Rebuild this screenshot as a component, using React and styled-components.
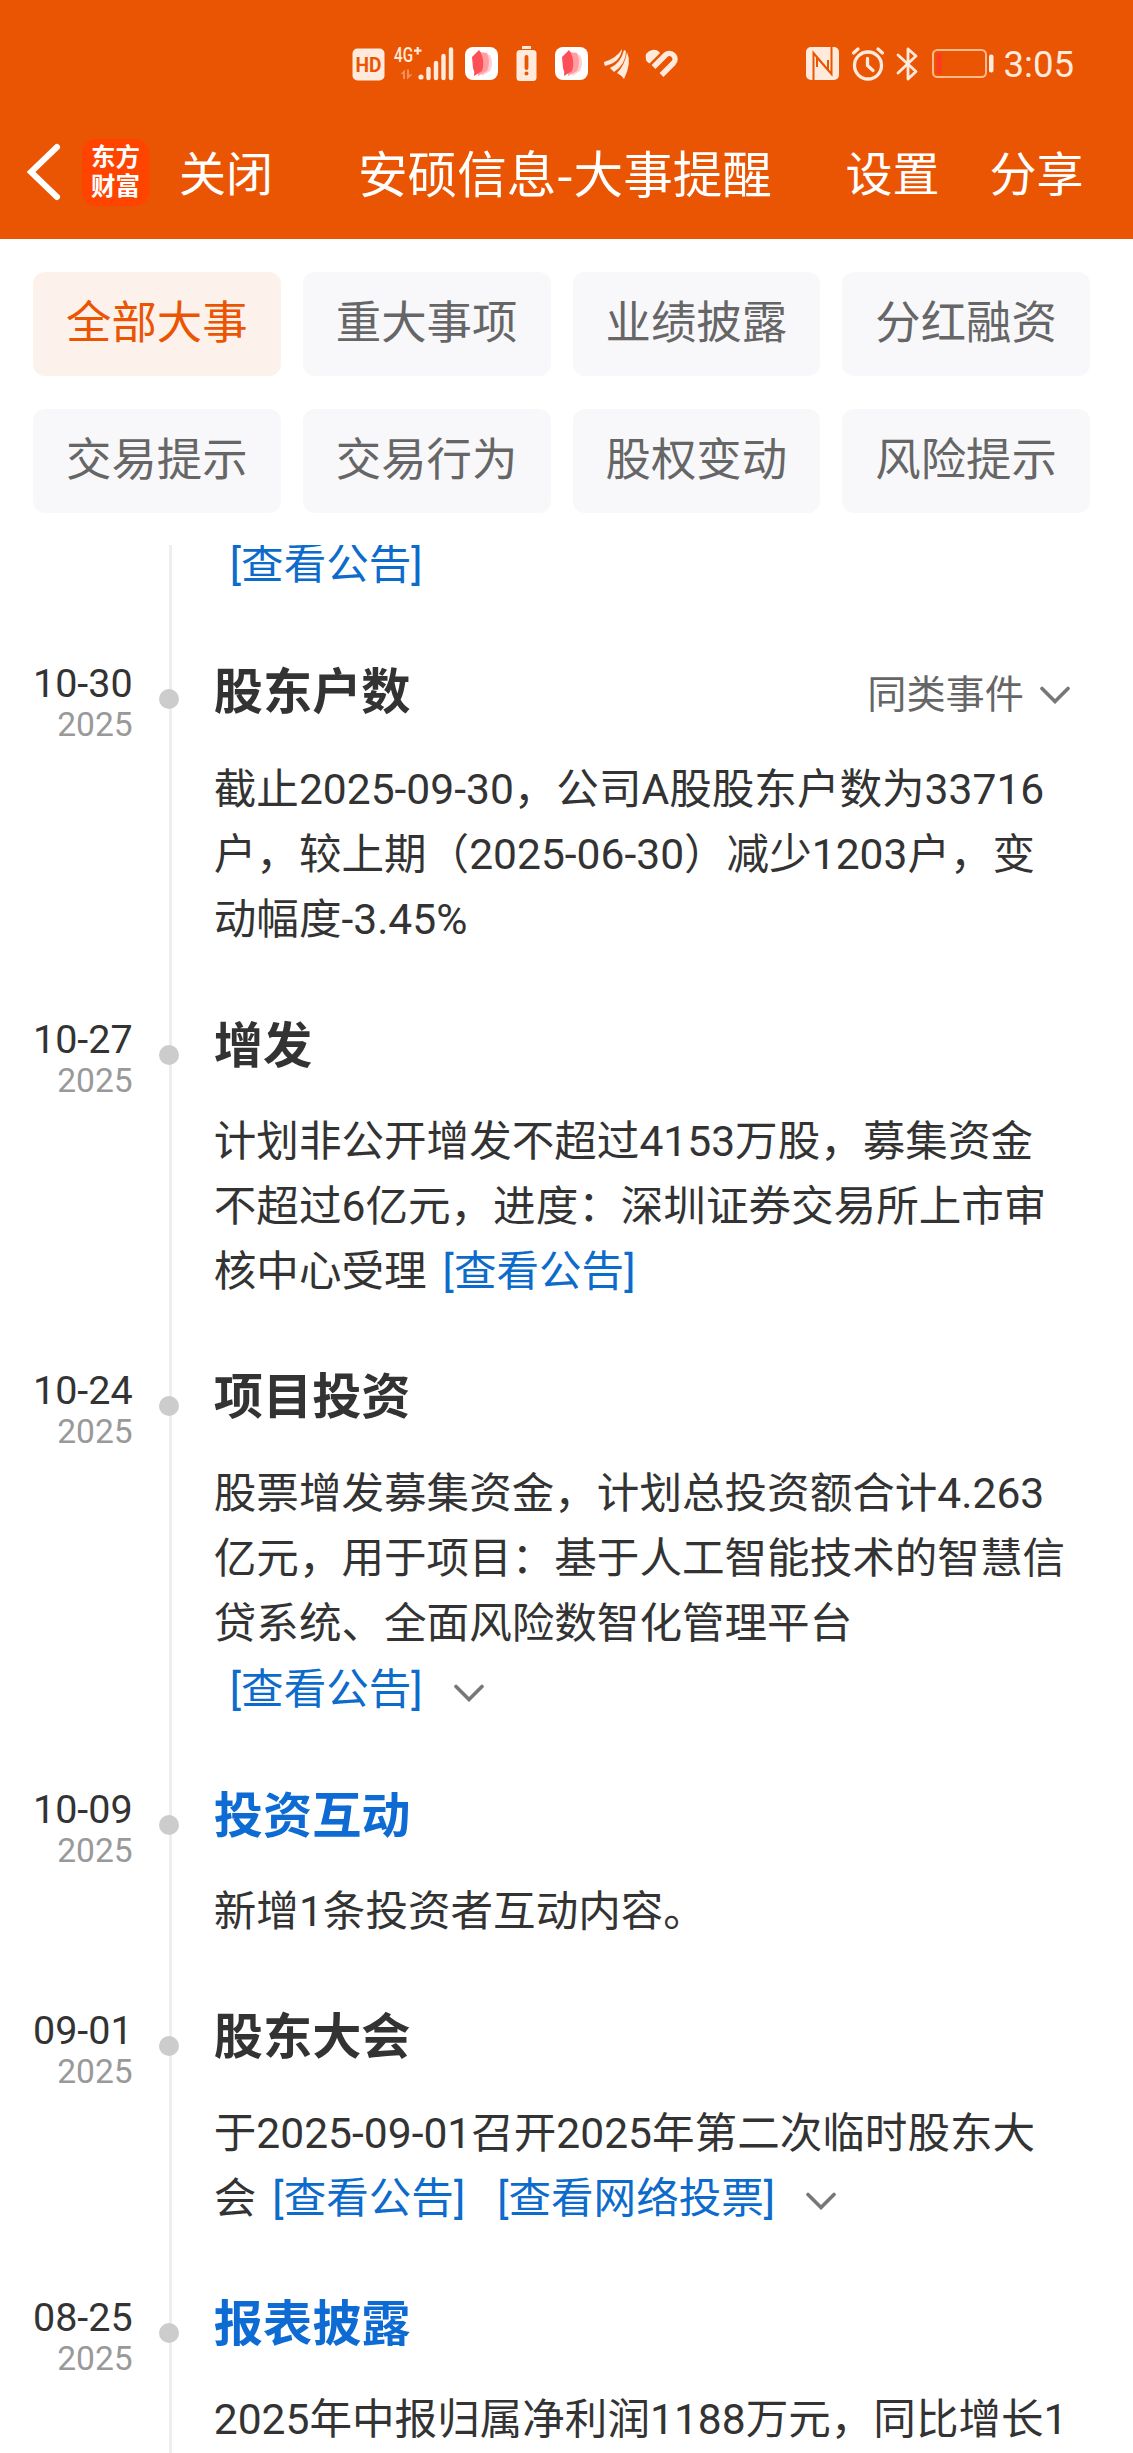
import React from "react";
import styled, { createGlobalStyle, css } from "styled-components";

const GlobalStyle = createGlobalStyle`
    body {
        margin: 0;
        background-color: #FFFFFF;
        font-family: Roboto, "Noto Sans CJK SC", sans-serif;
    }
`;

const Page = styled.div`
    display: flex;
    flex-direction: column;
    width: 1133px;
    height: 2453px;
    overflow: hidden;
    background-color: #FFFFFF;
`;

const Header = styled.header`
    height: 239px;
    background-color: #EA5504;
    color: #FFFFFF;
`;

const StatusBar = styled.div`
    display: flex;
    justify-content: space-between;
    height: 60px;
    padding: 45px 59px 0 352px;
    color: #FFEADC;
`;

const StatusGroup = styled.div`
    display: flex;
    align-items: flex-start;
`;

const StatusIcon = styled.svg`
    display: block;
    flex: none;
    width: ${({$w}) => $w}px;
    height: 38px;
    margin-right: ${({$gap}) => $gap || 0}px;
    fill: currentColor;
    overflow: visible;
`;

const Clock = styled.span`
    font-size: 36.6px;
    line-height: 40px;
`;

const NavBar = styled.nav`
    display: flex;
    align-items: center;
    height: 134px;
    font-family: "Noto Sans CJK SC", sans-serif;
    white-space: nowrap;
`;

const BackIcon = styled.svg`
    width: 36px;
    height: 60px;
    margin-left: 26px;
    fill: none;
    stroke: #FFFFFF;
    stroke-width: 6;
    stroke-linecap: round;
`;

const Logo = styled.div`
    box-sizing: border-box;
    display: flex;
    flex-direction: column;
    align-items: center;
    justify-content: center;
    width: 67px;
    height: 67px;
    margin-left: 20px;
    padding-bottom: 4px;
    border-radius: 14px;
    background-color: #FF4400;
    font-size: 24.5px;
    font-weight: 700;
    line-height: 29px;
`;

const NavButton = styled.button`
    border: none;
    padding: 0 0 3px;
    background: none;
    color: #FFFFFF;
    font-family: inherit;
    font-size: 47px;
    line-height: 60px;
    margin-left: ${({$left}) => $left}px;
`;

const NavTitle = styled.h1`
    margin: 0 0 0 85px;
    padding-bottom: 3px;
    font-size: 49.6px;
    font-weight: 400;
    line-height: 60px;
`;

const Filters = styled.div`
    display: grid;
    grid-template-columns: repeat(4, 1fr);
    gap: 33px 22px;
    padding: 33px 43px 32px 33px;
`;

const Chip = styled.button`
    height: 104px;
    border: none;
    border-radius: 12px;
    padding: 0 0 10px;
    background-color: #F8F8FB;
    color: #666666;
    font-family: inherit;
    font-size: 45.4px;
    white-space: nowrap;
    ${({$active}) => $active && css`
        background-color: #FDF1EB;
        color: #EA5504;
    `}
`;

const Timeline = styled.main`
    flex: 1;
    overflow: hidden;
    background: linear-gradient(#EEEEEE, #EEEEEE) 169px 0 / 3px 100% no-repeat;
`;

const Event = styled.section`
    display: flex;
    padding-bottom: 65.3px;
    margin-top: ${({$scrolled}) => $scrolled ? -13.3 : 0}px;
`;

const DateColumn = styled.div`
    flex: none;
    width: 132.7px;
    padding-top: 2px;
    text-align: right;
`;

const Day = styled.div`
    color: #333333;
    font-size: 39.5px;
    line-height: 40px;
`;

const Year = styled.div`
    color: #999999;
    font-size: 33.6px;
    line-height: 38px;
    margin-top: 2px;
`;

const Dot = styled.span`
    flex: none;
    width: 20px;
    height: 20px;
    margin: 27px 34.8px 0 26.3px;
    border-radius: 50%;
    background-color: #CCCCCC;
    visibility: ${({$hidden}) => $hidden ? "hidden" : "visible"};
`;

const Content = styled.div`
    flex: 1;
    padding-right: 63.5px;
`;

const TitleRow = styled.div`
    display: flex;
    justify-content: space-between;
    align-items: center;
    height: ${({$tall}) => $tall ? 60 : 56}px;
    margin-bottom: 35.4px;
`;

const Title = styled.h2`
    margin: 0;
    font-size: 49.2px;
    font-weight: 700;
    line-height: 60px;
    color: ${({$link}) => $link ? "#0D6BD3" : "#333333"};
`;

const Similar = styled.span`
    display: flex;
    align-items: center;
    gap: 15.5px;
    padding-top: 6px;
    color: #666666;
    font-size: 39.2px;
    line-height: 60px;
`;

const Line = styled.div`
    height: 65px;
    margin-top: ${({$linksOnly}) => $linksOnly ? 1.6 : 0}px;
    color: #333333;
    font-size: 42.57px;
    line-height: 65px;
    white-space: nowrap;
`;

const Link = styled.a`
    margin: 0 16px;
    color: #0D6BCB;
`;

const ChevronIcon = styled.svg`
    width: 30px;
    height: 18px;
    margin-left: ${({$left}) => $left || 0}px;
    vertical-align: 2.5px;
    fill: none;
    stroke: #777777;
    stroke-width: 3.6;
    stroke-linecap: round;
`;

const filters = ["全部大事", "重大事项", "业绩披露", "分红融资", "交易提示", "交易行为", "股权变动", "风险提示"];

const events = [
    {
        day: "10-30", title: "股东户数", similar: true,
        lines: [["截止2025-09-30，公司A股股东户数为33716"], ["户，较上期（2025-06-30）减少1203户，变"], ["动幅度-3.45%"]],
    },
    {
        day: "10-27", title: "增发",
        lines: [["计划非公开增发不超过4153万股，募集资金"], ["不超过6亿元，进度：深圳证券交易所上市审"], ["核中心受理", "[查看公告]"]],
    },
    {
        day: "10-24", title: "项目投资", more: true,
        lines: [["股票增发募集资金，计划总投资额合计4.263"], ["亿元，用于项目：基于人工智能技术的智慧信"], ["贷系统、全面风险数智化管理平台"], ["", "[查看公告]"]],
    },
    {
        day: "10-09", title: "投资互动", link: true,
        lines: [["新增1条投资者互动内容。"]],
    },
    {
        day: "09-01", title: "股东大会", more: true,
        lines: [["于2025-09-01召开2025年第二次临时股东大"], ["会", "[查看公告]", "[查看网络投票]"]],
    },
    {
        day: "08-25", title: "报表披露", link: true,
        lines: [["2025年中报归属净利润1188万元，同比增长1"]],
    },
];

function Chevron({left}) {
    return <ChevronIcon $left={left} viewBox="0 0 30 18">
        <path d="M2 2.5L15 15.5L28 2.5"/>
    </ChevronIcon>;
}

function ReaderIcon({gap}) {
    return <StatusIcon $w={33} $gap={gap} viewBox="0 0 33 38">
        <rect y="2" width="33" height="33" rx="8" fill="#FFFFFF"/>
        <path d="M17 8L25 10Q29 18 25 26L17 31Z" fill="#FFD0D3"/>
        <path d="M14 7L22 8Q26 17 22 26L13 31Z" fill="#FF9DA2"/>
        <path d="M7 12L14 5L16 8Q20 17 17 26L9 31Q10 27 8 23Z" fill="#FC4F58"/>
    </StatusIcon>;
}

function StatusIcons() {
    return <StatusBar>
        <StatusGroup>
            <StatusIcon $w={33} $gap={9} viewBox="0 0 33 38">
                <rect x="0.5" y="3.5" width="32" height="32" rx="5"/>
                <text x="16.5" y="27" textAnchor="middle" textLength="26" lengthAdjust="spacingAndGlyphs"
                      fontSize="21" fontWeight="700" fill="#EA5504">HD</text>
            </StatusIcon>
            <StatusIcon $w={60} $gap={11} viewBox="0 0 60 38">
                <text x="0" y="17" textLength="19" lengthAdjust="spacingAndGlyphs" fontSize="20" fontWeight="500">4G</text>
                <path d="M20 5.7H27.5M23.7 2V9.5" stroke="currentColor" strokeWidth="2.2"/>
                <path d="M6.5 29L11 24.5V34H9V29ZM13 24.5H15V29.5H18.5L13 34.5Z" opacity="0.4"/>
                <circle cx="27" cy="32" r="2.6"/>
                <path d="M34.5 24V33M42 18V33M49.5 11V33M57 4.5V33" stroke="currentColor" strokeWidth="4.4" strokeLinecap="round"/>
            </StatusIcon>
            <ReaderIcon gap={18}/>
            <StatusIcon $w={21} $gap={18} viewBox="0 0 21 38">
                <rect x="6" y="1" width="9" height="3"/>
                <rect x="0.5" y="5" width="20" height="31" rx="3.5"/>
                <path d="M10.5 12V23" stroke="#EA5504" strokeWidth="3.8" strokeLinecap="round"/>
                <circle cx="10.5" cy="28.5" r="2" fill="#EA5504"/>
            </StatusIcon>
            <ReaderIcon gap={16}/>
            <StatusIcon $w={25} $gap={16} viewBox="0 0 25 38">
                <path d="M0 17Q13 13 18 4Q17 17 1 21Q0 19 0 17ZM6 23Q17 18 20 5L22 6Q22 19 10 27ZM13 28Q21 20 23 7Q28 18 20 34Q17 30 13 28Z"/>
            </StatusIcon>
            <StatusIcon $w={34} viewBox="0 0 34 38">
                <path d="M1 15Q-1 7 7 5Q12 4 15 8L4.5 18.5Q2 17 1 15Z"/>
                <path d="M8.5 22L20.5 10A5.66 5.66 0 0 1 28.5 18L16.5 30" fill="none" stroke="currentColor" strokeWidth="5.4"/>
            </StatusIcon>
        </StatusGroup>
        <StatusGroup>
            <StatusIcon $w={33} $gap={12} viewBox="0 0 33 38">
                <rect y="2" width="33" height="33" rx="5"/>
                <path d="M7.5 35V8L22 25V15M25.5 2V29L11 12.5V22" fill="none" stroke="#EA5504" strokeWidth="2"/>
            </StatusIcon>
            <StatusIcon $w={34} $gap={11} viewBox="0 0 34 38">
                <g fill="none" stroke="currentColor" strokeWidth="3.3" strokeLinecap="round">
                    <circle cx="17" cy="20.5" r="13.5"/>
                    <path d="M2.5 8L7 4M31.5 8L27 4M16.5 13.5V20.5L22 25.5"/>
                </g>
            </StatusIcon>
            <StatusIcon $w={22} $gap={14} viewBox="0 0 22 38">
                <path d="M2 10L20 26.5L12 34V4L20 11L2 28" fill="none" stroke="currentColor" strokeWidth="2.8" strokeLinecap="round" strokeLinejoin="round"/>
            </StatusIcon>
            <StatusIcon $w={62} $gap={9} viewBox="0 0 62 38">
                <rect x="1" y="5" width="53" height="27" rx="4.5" fill="none" stroke="#FFB98D" strokeWidth="2"/>
                <rect x="4.5" y="8" width="5" height="21" rx="1" fill="#FF3B1F"/>
                <rect x="57" y="9.5" width="4.5" height="18" rx="2"/>
            </StatusIcon>
            <Clock>3:05</Clock>
        </StatusGroup>
    </StatusBar>;
}

function TimelineEvent({event}) {
    return <Event>
        <DateColumn>
            <Day>{event.day}</Day>
            <Year>2025</Year>
        </DateColumn>
        <Dot/>
        <Content>
            <TitleRow $tall={event.similar}>
                <Title $link={event.link}>{event.title}</Title>
                {event.similar && <Similar>同类事件<Chevron/></Similar>}
            </TitleRow>
            {event.lines.map(([text, ...links], index) => <Line key={index} $linksOnly={!text}>
                {text}
                {links.map(link => <Link key={link}>{link}</Link>)}
                {event.more && index === event.lines.length - 1 && <Chevron left={15}/>}
            </Line>)}
        </Content>
    </Event>;
}

function App() {
    return <Page>
        <GlobalStyle/>
        <Header>
            <StatusIcons/>
            <NavBar>
                <BackIcon viewBox="0 0 36 60">
                    <path d="M31 5L5 30L31 55"/>
                </BackIcon>
                <Logo>
                    <span>东方</span>
                    <span>财富</span>
                </Logo>
                <NavButton $left={30}>关闭</NavButton>
                <NavTitle>安硕信息-大事提醒</NavTitle>
                <NavButton $left={73.5}>设置</NavButton>
                <NavButton $left={50}>分享</NavButton>
            </NavBar>
        </Header>
        <Filters>
            {filters.map((name, index) => <Chip key={name} $active={index === 0}>{name}</Chip>)}
        </Filters>
        <Timeline>
            <Event $scrolled>
                <DateColumn/>
                <Dot $hidden/>
                <Content>
                    <Line><Link>[查看公告]</Link></Line>
                </Content>
            </Event>
            {events.map(event => <TimelineEvent key={event.day} event={event}/>)}
        </Timeline>
    </Page>;
}

export default App;
